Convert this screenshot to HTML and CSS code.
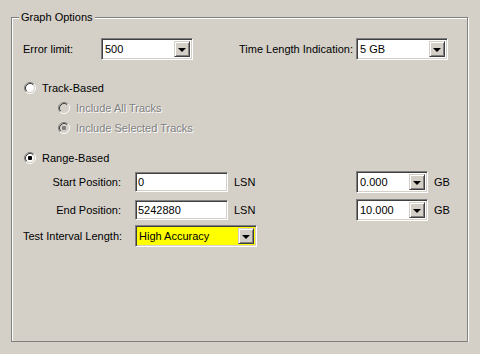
FILE: index.html
```html
<!doctype html>
<html>
    <head>
        <meta charset="utf-8">
        <title>Graph Options</title>
        <link rel="stylesheet" href="styles.css">
    </head>
    <body>
        <div class="group">
            <div class="legend">Graph Options</div>

            <div class="row first">
                <span class="lbl err-lbl">Error limit:</span>
                <div class="combo w92"><span class="val">500</span><span class="btn"><i class="tri"></i></span></div>
                <span class="lbl tli-lbl">Time Length Indication:</span>
                <div class="combo w92"><span class="val">5 GB</span><span class="btn"><i class="tri"></i></span></div>
            </div>

            <div class="opt track">
                <svg class="radio" width="12" height="12" viewBox="0 0 12 12">
                    <circle cx="6" cy="6" r="4" fill="#fff"/>
                    <path d="M2.11 9.89A5.5 5.5 0 0 1 9.89 2.11" stroke="#808080" fill="none"/>
                    <path d="M2.82 9.18A4.5 4.5 0 0 1 9.18 2.82" stroke="#404040" fill="none"/>
                    <path d="M9.89 2.11A5.5 5.5 0 0 1 2.11 9.89" stroke="#fff" fill="none"/>
                    <path d="M9.18 2.82A4.5 4.5 0 0 1 2.82 9.18" stroke="#d4d0c8" fill="none"/>
                </svg>
                <span>Track-Based</span>
            </div>
            <div class="opt sub disabled">
                <svg class="radio" width="12" height="12" viewBox="0 0 12 12">
                    <circle cx="6" cy="6" r="4" fill="#d4d0c8"/>
                    <path d="M2.11 9.89A5.5 5.5 0 0 1 9.89 2.11" stroke="#808080" fill="none"/>
                    <path d="M2.82 9.18A4.5 4.5 0 0 1 9.18 2.82" stroke="#404040" fill="none"/>
                    <path d="M9.89 2.11A5.5 5.5 0 0 1 2.11 9.89" stroke="#fff" fill="none"/>
                    <path d="M9.18 2.82A4.5 4.5 0 0 1 2.82 9.18" stroke="#d4d0c8" fill="none"/>
                </svg>
                <span>Include All Tracks</span>
            </div>
            <div class="opt sub disabled">
                <svg class="radio" width="12" height="12" viewBox="0 0 12 12">
                    <circle cx="6" cy="6" r="4" fill="#d4d0c8"/>
                    <path d="M2.11 9.89A5.5 5.5 0 0 1 9.89 2.11" stroke="#808080" fill="none"/>
                    <path d="M2.82 9.18A4.5 4.5 0 0 1 9.18 2.82" stroke="#404040" fill="none"/>
                    <path d="M9.89 2.11A5.5 5.5 0 0 1 2.11 9.89" stroke="#fff" fill="none"/>
                    <path d="M9.18 2.82A4.5 4.5 0 0 1 2.82 9.18" stroke="#d4d0c8" fill="none"/>
                    <rect x="4" y="4" width="4" height="4" rx="1" fill="#808080"/>
                </svg>
                <span>Include Selected Tracks</span>
            </div>

            <div class="opt range">
                <svg class="radio" width="12" height="12" viewBox="0 0 12 12">
                    <circle cx="6" cy="6" r="4" fill="#fff"/>
                    <path d="M2.11 9.89A5.5 5.5 0 0 1 9.89 2.11" stroke="#808080" fill="none"/>
                    <path d="M2.82 9.18A4.5 4.5 0 0 1 9.18 2.82" stroke="#404040" fill="none"/>
                    <path d="M9.89 2.11A5.5 5.5 0 0 1 2.11 9.89" stroke="#fff" fill="none"/>
                    <path d="M9.18 2.82A4.5 4.5 0 0 1 2.82 9.18" stroke="#d4d0c8" fill="none"/>
                    <rect x="4" y="4" width="4" height="4" rx="1" fill="#000"/>
                </svg>
                <span>Range-Based</span>
            </div>

            <div class="pos">
                <span class="plbl">Start Position:</span>
                <div class="edit">0</div>
                <span class="unit">LSN</span>
                <div class="combo w72"><span class="val">0.000</span><span class="btn"><i class="tri"></i></span></div>
                <span class="unit">GB</span>

                <span class="plbl">End Position:</span>
                <div class="edit">5242880</div>
                <span class="unit">LSN</span>
                <div class="combo w72"><span class="val">10.000</span><span class="btn"><i class="tri"></i></span></div>
                <span class="unit">GB</span>
            </div>

            <div class="row interval">
                <span class="lbl int-lbl">Test Interval Length:</span>
                <div class="combo w122 hilite"><span class="val">High Accuracy</span><span class="btn"><i class="tri"></i></span></div>
            </div>
        </div>
    </body>
</html>
```

FILE: styles.css
```css
body {
    margin: 0;
    background: #d4d0c8;
    font-family: "Liberation Sans", Arial, sans-serif;
    font-size: 11px;
    color: #000;
}
.group {
    position: relative;
    box-sizing: border-box;
    margin: 17px 0 0 11px;
    width: 457px;
    height: 325px;
    padding: 20px 0 0 11px;
    border: 1px solid #808080;
    box-shadow: inset 1px 1px #fff, 1px 1px #fff;
}
.legend {
    position: absolute;
    top: -8px;
    left: 7px;
    padding: 0 2px;
    background: #d4d0c8;
    line-height: 14px;
}
.row {
    display: flex;
    align-items: center;
}
.err-lbl { width: 78px; }
.tli-lbl { margin-left: 46px; width: 117px; }
.int-lbl { width: 112px; }

/* combo box */
.combo {
    box-sizing: border-box;
    height: 22px;
    display: flex;
    align-items: stretch;
    background: #fff;
    border: 1px solid;
    border-color: #808080 #fff #fff #808080;
    box-shadow: inset 1px 1px #404040, inset -1px -1px #d4d0c8;
    padding: 2px;
}
.w92 { width: 92px; }
.w72 { width: 72px; }
.w122 { width: 122px; }
.hilite { background: #ffff00; }
.combo .val {
    flex: 1;
    padding-left: 1px;
    line-height: 16px;
}
.combo .btn {
    box-sizing: border-box;
    width: 16px;
    background: #d4d0c8;
    border: 1px solid;
    border-color: #d4d0c8 #404040 #404040 #d4d0c8;
    box-shadow: inset 1px 1px #fff, inset -1px -1px #808080;
    display: flex;
    align-items: center;
    justify-content: center;
}
.tri {
    width: 0;
    height: 0;
    border-left: 4px solid transparent;
    border-right: 4px solid transparent;
    border-top: 4px solid #000;
    margin-top: 1px;
}

/* radio options */
.opt {
    display: flex;
    align-items: center;
    height: 16px;
    padding-left: 1px;
}
.opt .radio { margin-right: 6px; }
.track { margin-top: 20px; }
.sub { margin-top: 4px; padding-left: 35px; }
.range { margin-top: 14px; }
.disabled span {
    color: #808080;
    text-shadow: 1px 1px #fff;
}

/* position grid */
.pos {
    display: grid;
    grid-template-columns: 112px 93px 128px 72px auto;
    row-gap: 6px;
    align-items: center;
    margin-top: 5px;
}
.plbl {
    text-align: right;
    padding-right: 14px;
}
.unit { padding-left: 6px; }
.edit {
    box-sizing: border-box;
    height: 20px;
    background: #fff;
    border: 1px solid;
    border-color: #808080 #fff #fff #808080;
    box-shadow: inset 1px 1px #404040, inset -1px -1px #d4d0c8;
    padding: 0 2px;
    line-height: 18px;
}
.interval { margin-top: 4px; }
```
